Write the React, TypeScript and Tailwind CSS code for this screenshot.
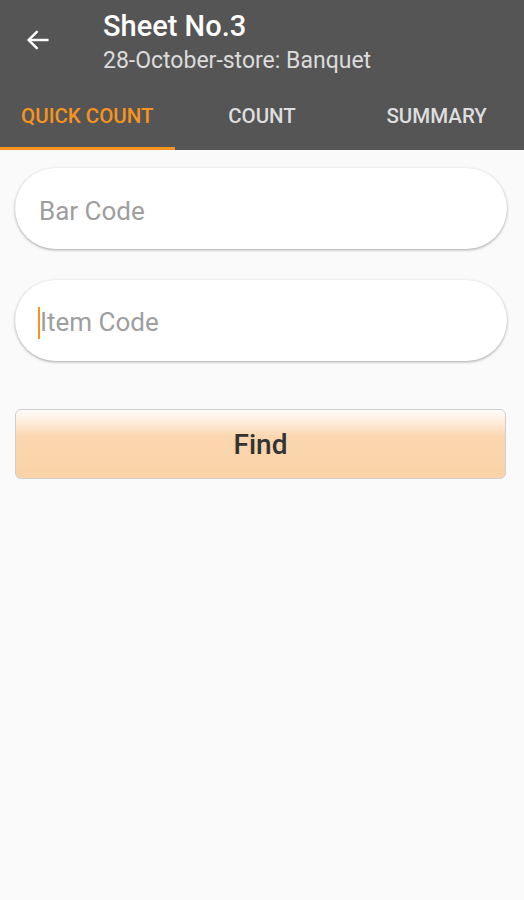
import { useState } from "react";

const TABS = ["QUICK COUNT", "COUNT", "SUMMARY"];

function BackArrow() {
  return (
    <svg width="28" height="28" viewBox="0 0 24 24" fill="none" stroke="white" strokeWidth="2.1" strokeLinecap="square">
      <path d="M20 12H5" />
      <path d="M11 5l-7 7 7 7" strokeLinecap="round" strokeLinejoin="miter" />
    </svg>
  );
}

export default function App() {
  const [tab, setTab] = useState(0);

  return (
    <div className="flex min-h-[900px] w-full flex-col bg-[#fafafa] font-['Roboto',sans-serif]">
      {/* toolbar */}
      <div className="bg-[#555555]">
        <div className="flex h-[92px] items-start pt-[9px]">
          <div className="mt-[17px] ml-[24px] flex w-[79px]">
            <BackArrow />
          </div>
          <div className="flex flex-col gap-[4px]">
            <span className="text-[29px] font-medium leading-[34px] text-white">Sheet No.3</span>
            <span className="text-[23px] leading-[28px] text-[#dcdcdc]">28-October-store: Banquet</span>
          </div>
        </div>
        <div className="grid h-[58px] grid-cols-3">
          {TABS.map((t, i) => (
            <button
              key={t}
              type="button"
              onClick={() => setTab(i)}
              className={
                i === tab
                  ? "flex flex-col items-center justify-between text-[20.5px] font-medium text-[#f7931e]"
                  : "flex flex-col items-center justify-between text-[20.5px] font-medium text-[#dedede]"
              }
            >
              <span className="pt-[10px] leading-[28px]">{t}</span>
              <span className={i === tab ? "h-[3px] w-full bg-[#f7931e]" : "h-[3px] w-full bg-transparent"} />
            </button>
          ))}
        </div>
      </div>

      {/* form */}
      <div className="flex flex-col pl-[15px] pr-[17px] pt-[18px]">
        <div className="flex h-[81px] items-center rounded-full bg-white pl-[24px] pt-[5px] shadow-[0_1px_3px_rgba(0,0,0,0.35)]">
          <span className="text-[26px] text-[#9e9e9e]">Bar Code</span>
        </div>
        <div className="mt-[31px] flex h-[81px] items-center rounded-full bg-white pl-[23px] pt-[4px] shadow-[0_1px_3px_rgba(0,0,0,0.35)]">
          <span className="h-[32px] w-[2px] bg-[#f7931e]" />
          <span className="text-[26px] text-[#9e9e9e]">Item Code</span>
        </div>
        <button
          type="button"
          className="mt-[48px] mr-[1px] flex h-[70px] items-center justify-center rounded-[6px] border border-[#cfcfcf] bg-gradient-to-b from-[#fffdfb] via-[#fbd6ae] via-40% to-[#fad3a8] pt-[2px] text-[28px] font-medium text-[#333333]"
        >
          Find
        </button>
      </div>
    </div>
  );
}
